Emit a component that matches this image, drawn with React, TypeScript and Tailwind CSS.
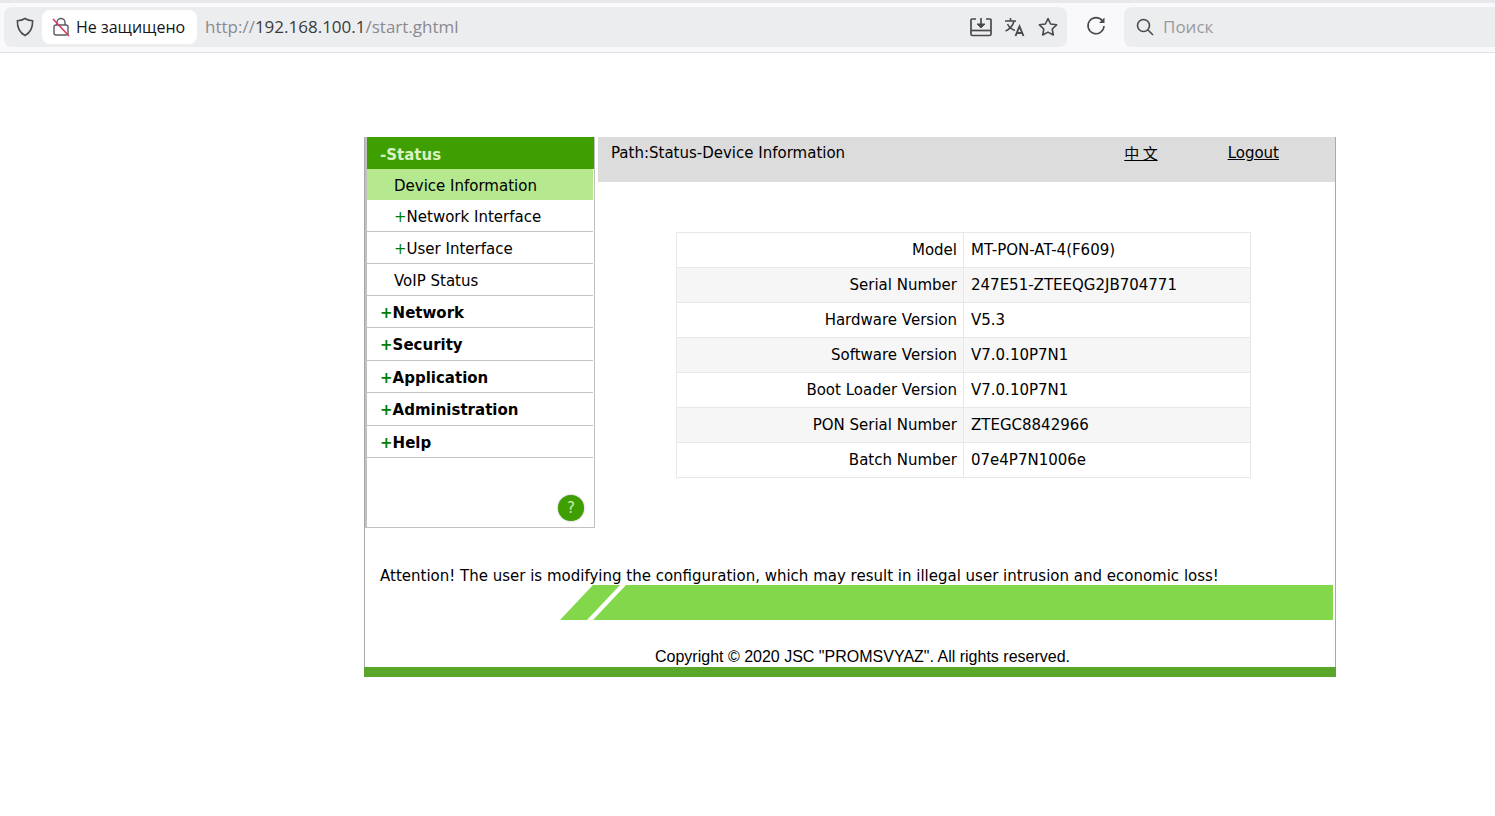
const FONT = "font-['DejaVu_Sans',Verdana,sans-serif]";

const subItems = [
  { label: "Network Interface", plus: true },
  { label: "User Interface", plus: true },
  { label: "VoIP Status", plus: false },
];

const topItems = ["Network", "Security", "Application", "Administration", "Help"];

const rows = [
  ["Model", "MT-PON-AT-4(F609)"],
  ["Serial Number", "247E51-ZTEEQG2JB704771"],
  ["Hardware Version", "V5.3"],
  ["Software Version", "V7.0.10P7N1"],
  ["Boot Loader Version", "V7.0.10P7N1"],
  ["PON Serial Number", "ZTEGC8842966"],
  ["Batch Number", "07e4P7N1006e"],
];

function Toolbar() {
  return (
    <div className="h-[53px] bg-[#f9f9fb] border-b border-[#e0e0e6] border-t-[3px] border-t-[#e8e8ec] pt-1 flex items-start font-['Open_Sans',sans-serif]">
      <div className="ml-1 w-[1063px] h-10 rounded-lg bg-[#ecedef] flex items-center">
        <svg className="ml-[12px] shrink-0" width="18" height="20" viewBox="0 0 18 20" fill="none" stroke="#4a4a4f" strokeWidth="1.6">
          <path d="M9 1.5 C6.5 3 4 3.6 1.4 3.8 C1.2 10 3 15.5 9 18.5 C15 15.5 16.8 10 16.6 3.8 C14 3.6 11.5 3 9 1.5 Z" />
        </svg>
        <div className="ml-[8px] w-[155px] h-[34px] rounded-lg bg-white flex items-center">
          <svg className="ml-[10px] shrink-0" width="18" height="20" viewBox="0 0 18 20" fill="none" stroke="#5b5b66" strokeWidth="1.4">
            <rect x="2" y="8" width="14" height="10" rx="2" />
            <path d="M5 8 V5.5 C5 3 7 1.5 9 1.5 C11 1.5 13 3 13 5.5 V8" />
            <path d="M1 2 L17 19" stroke="#d9365f" strokeWidth="1.5" />
          </svg>
          <span className="ml-[6px] text-[16px] text-[#15141a] whitespace-nowrap">Не защищено</span>
        </div>
        <span className="ml-[8px] text-[17px] text-[#8a8a90] whitespace-nowrap">
          http://<span className="text-[#3a3a40]">192.168.100.1</span>/start.ghtml
        </span>
        <div className="ml-auto mr-[9px] flex items-center gap-[12px] text-[#4a4a4f]">
          <svg width="22" height="20" viewBox="0 0 22 20" fill="none" stroke="#4a4a4f" strokeWidth="1.7">
            <path d="M6 2 H2 a1 1 0 0 0 -1 1 V17 a1.5 1.5 0 0 0 1.5 1.5 H19.5 a1.5 1.5 0 0 0 1.5 -1.5 V3 a1 1 0 0 0 -1 -1 H16" />
            <path d="M1 13.5 H21" />
            <path d="M11 1 V9" />
            <path d="M7 7 L11 11 L15 7 Z" fill="#4a4a4f" strokeWidth="1" />
          </svg>
          <svg width="22" height="20" viewBox="0 0 22 20" fill="none" stroke="#4a4a4f" strokeWidth="1.6">
            <path d="M1 4 H12 M6.5 1 V4 M10 4 C9 8 6 12 1.5 14 M3.5 7 C5 10 8 12.5 11 13.5" />
            <path d="M11.5 19 L15.5 9.5 L19.5 19 M13 16 H18" strokeWidth="1.9" />
          </svg>
          <svg width="20" height="20" viewBox="0 0 20 20" fill="none" stroke="#4a4a4f" strokeWidth="1.6" strokeLinejoin="round">
            <path d="M10 1.5 L12.6 7 L18.6 7.8 L14.2 12 L15.3 18 L10 15.1 L4.7 18 L5.8 12 L1.4 7.8 L7.4 7 Z" />
          </svg>
        </div>
      </div>
      <svg className="ml-[19px] mt-[9px] shrink-0" width="20" height="20" viewBox="0 0 20 20" fill="none" stroke="#4a4a4f" strokeWidth="1.6">
        <path d="M16.5 5 A8 8 0 1 0 18 10" />
        <path d="M18.5 1.5 V7 H13 Z" fill="#4a4a4f" stroke="none" />
      </svg>
      <div className="ml-[18px] flex-1 h-10 rounded-l-lg bg-[#ecedef] flex items-center">
        <svg className="ml-[12px] shrink-0" width="18" height="18" viewBox="0 0 18 18" fill="none" stroke="#4a4a4f" strokeWidth="1.6">
          <circle cx="7.5" cy="7.5" r="6" />
          <path d="M12 12 L17 17" />
        </svg>
        <span className="ml-[9px] text-[17px] text-[#9a9aa0]">Поиск</span>
      </div>
    </div>
  );
}

function Plus({ big }: { big?: boolean }) {
  return <span className={big ? "text-[#008000] font-bold" : "text-[#008000]"}>+</span>;
}

function SideNav() {
  return (
    <div className="w-[230px] h-[391px] border-l-2 border-r border-b border-[#c0c0c0] flex flex-col shrink-0">
      <div className="h-[32px] bg-[#3f9f00] pl-[13px] pt-[8px] text-[15px] leading-[20px] font-bold text-[#d9f2c4]">-Status</div>
      <div className="h-[31px] bg-[#b5e88f] pl-[27px] mr-px text-[15px] leading-[34px] text-black">Device Information</div>
      {subItems.map((s) => (
        <div key={s.label} className="h-[32px] border-b border-[#c4c4c4] pl-[27px] mr-px text-[15px] leading-[35px] text-black">
          {s.plus && <Plus />}
          {s.label}
        </div>
      ))}
      {topItems.map((t) => (
        <div key={t} className="h-[32.4px] border-b border-[#c4c4c4] pl-[13px] mr-px text-[15px] leading-[35px] font-bold text-black">
          <Plus big />
          {t}
        </div>
      ))}
      <div className="mt-auto mb-[6px] mr-[10px] self-end w-[26px] h-[26px] rounded-full bg-[#3f9f00] flex items-center justify-center text-[15px] text-[#cfe8b8] shadow-[0_0_2px_#999]">
        ?
      </div>
    </div>
  );
}

export default function App() {
  return (
    <div className={`h-screen bg-white overflow-hidden ${FONT}`}>
      <Toolbar />
      <div className="ml-[364px] mt-[84px] w-[972px] h-[540px] border-l border-r border-[#a9a9a9] flex flex-col">
        <div className="flex items-start">
          <SideNav />
          <div className="ml-[3px] flex-1 flex flex-col">
            <div className="h-[45px] bg-[#dcdcdc] flex text-[15px] leading-[18px] text-black pt-[7px]">
              <span className="ml-[13px]">Path:Status-Device Information</span>
              <span className="ml-auto mr-[70px] underline whitespace-pre font-['Noto_Sans_CJK_SC',sans-serif]">中 文</span>
              <span className="mr-[56px] underline">Logout</span>
            </div>
            <table className="ml-[78px] mt-[50px] w-[575px] border-collapse text-[15px] text-black">
              <tbody>
                {rows.map(([k, v], i) => (
                  <tr key={k} className={i % 2 === 1 ? "h-[35px] bg-[#f6f6f6]" : "h-[35px] bg-white"}>
                    <td className="w-[287px] border border-[#e8e8e8] text-right pr-[6px]">{k}</td>
                    <td className="border border-[#e8e8e8] pl-[7px]">{v}</td>
                  </tr>
                ))}
              </tbody>
            </table>
          </div>
        </div>
        <div className="ml-[15px] mt-[39px] text-[15px] leading-[18px] text-black whitespace-nowrap">
          Attention! The user is modifying the configuration, which may result in illegal user intrusion and economic loss!
        </div>
        <svg className="ml-[195px] shrink-0" width="773" height="35" viewBox="0 0 773 35">
          <polygon points="0,35 33,0 60,0 27,35" fill="#82d74a" />
          <polygon points="33,35 66,0 773,0 773,35" fill="#82d74a" />
        </svg>
        <div className="mt-[28px] ml-[290px] text-[16px] leading-[18px] text-black font-['Liberation_Sans',sans-serif] whitespace-nowrap">
          Copyright © 2020 JSC "PROMSVYAZ". All rights reserved.
        </div>
        <div className="mt-auto -mx-px h-[10px] bg-[#5aa62a]" />
      </div>
    </div>
  );
}
